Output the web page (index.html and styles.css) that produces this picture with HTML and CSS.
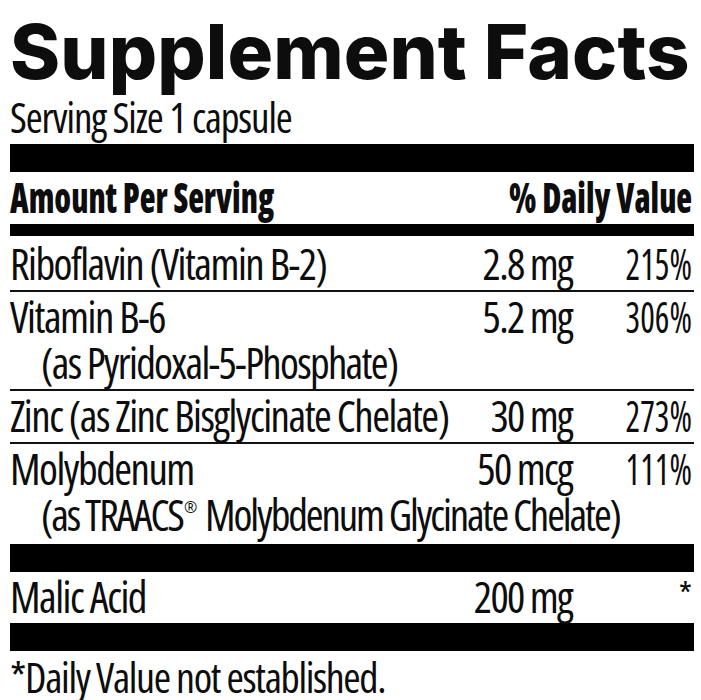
FILE: index.html
```html
<!DOCTYPE html>
<html lang="en">
<head>
    <meta charset="UTF-8">
    <meta name="viewport" content="width=device-width, initial-scale=1.0">
    <title>Supplement Facts</title>
    <link rel="stylesheet" href="styles.css">
</head>
<body>

<div class="label">
    <h1 class="title">Supplement Facts</h1>
    <p class="serving">Serving Size 1 capsule</p>

    <div class="bar bar-thick gap-7"></div>
    <div class="head">
        <span class="sq">Amount Per Serving</span>
        <span class="sq sq-r">% Daily Value</span>
    </div>
    <div class="bar bar-thin gap-7"></div>

    <!-- nutrient rows -->
    <div class="row first">
        <div class="name">Riboflavin (Vitamin B-2)</div>
        <div class="amt">2.8 mg</div>
        <div class="dv"><span class="sq sq-r">215%</span></div>
    </div>
    <div class="row">
        <div class="name">Vitamin B-6</div>
        <div class="amt">5.2 mg</div>
        <div class="dv"><span class="sq sq-r">306%</span></div>
        <div class="sub">(as Pyridoxal-5-Phosphate)</div>
    </div>
    <div class="row">
        <div class="name">Zinc (as Zinc Bisglycinate Chelate)</div>
        <div class="amt">30 mg</div>
        <div class="dv"><span class="sq sq-r">273%</span></div>
    </div>
    <div class="row last">
        <div class="name">Molybdenum</div>
        <div class="amt">50 mcg</div>
        <div class="dv"><span class="sq sq-r">111%</span></div>
        <div class="sub sub-long">(as TRAACS<sup class="reg">®</sup> Molybdenum Glycinate Chelate)</div>
    </div>

    <div class="bar bar-thick gap-6"></div>
    <div class="row last">
        <div class="name">Malic Acid</div>
        <div class="amt">200 mg</div>
        <div class="dv star">*</div>
    </div>
    <div class="bar bar-thick gap-3"></div>

    <p class="note">*Daily Value not established.</p>
</div>

</body>
</html>
```
FILE: styles.css
```css
body {
    margin: 0;
    background-color: #fff;
    color: #0d0d0d;
    font-family: "Open Sans", "DejaVu Sans Condensed", sans-serif;
    font-stretch: 75%;
}
.label {
    padding: 0 7px 0 10px;
}
.title {
    margin: 13px 0 0;
    font-family: Inter, Lato, sans-serif;
    font-weight: 800;
    font-stretch: normal;
    font-size: 76px;
    line-height: 1;
    letter-spacing: 0.1px;
    white-space: nowrap;
}

/* bold heading and percentages are narrower than the face, squeeze them */
.sq {
    display: inline-block;
    white-space: nowrap;
    transform: scaleX(0.8);
    transform-origin: left center;
}
.sq-r {
    transform-origin: right center;
}

.serving {
    margin: 8px 0 0;
    font-size: 41px;
    line-height: 40px;
    letter-spacing: -1.1px;
}
.bar {
    background-color: #000;
}
.bar-thick {
    height: 28px;
}
.bar-thin {
    height: 12px;
}
.gap-7 {
    margin-top: 7px;
}
.gap-6 {
    margin-top: 6px;
}
.gap-3 {
    margin-top: 3px;
}
.head {
    display: flex;
    justify-content: space-between;
    margin-top: 5px;
    padding-right: 2px;
    font-weight: 800;
    font-size: 42px;
    line-height: 40px;
}
.head .sq {
    transform: scaleX(0.775);
}
.row {
    display: grid;
    grid-template-columns: minmax(0, 1fr) auto 122px;
    padding: 2px 0 3px;
    border-bottom: 2px solid #111;
    font-size: 43px;
    line-height: 46px;
    letter-spacing: -1.5px;
}
.row.first {
    padding-top: 5px;
}
.row.last {
    border-bottom: none;
    padding-bottom: 0;
}
.name, .amt, .sub {
    white-space: nowrap;
}
.amt {
    text-align: right;
    letter-spacing: -1.7px;
}
.dv {
    text-align: right;
    padding-right: 2px;
    letter-spacing: 0;
}
.star {
    font-size: 34px;
    line-height: 40px;
}
.sub {
    grid-column: 1 / -1;
    padding-left: 31px;
    letter-spacing: -1.7px;
}
.sub-long {
    letter-spacing: -2.1px;
}
.reg {
    font-size: 16px;
    line-height: 0;
    letter-spacing: 0;
    vertical-align: 18px;
    margin: 0 2px 0 1px;
}
.note {
    margin: 3px 0 0;
    font-size: 42px;
    line-height: 46px;
    letter-spacing: -1.35px;
}
```
